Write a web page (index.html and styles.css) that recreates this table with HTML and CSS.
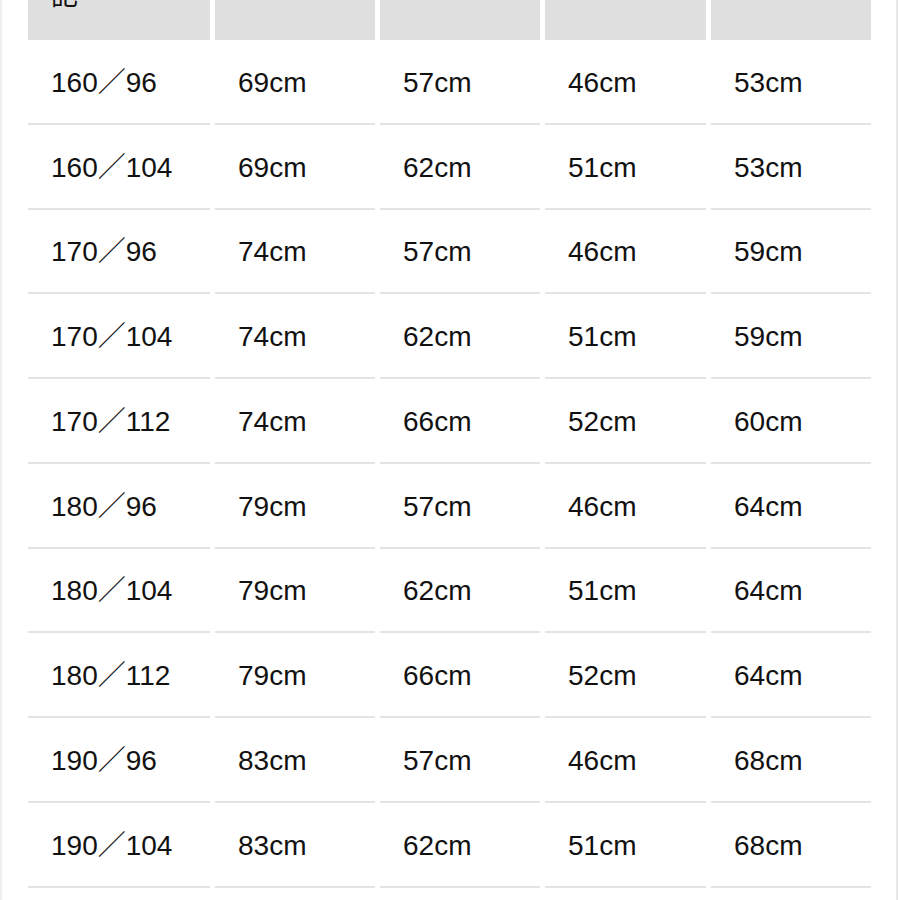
FILE: index.html
```html
<!DOCTYPE html>
<html>
<head>
<meta charset="utf-8">
<link rel="stylesheet" href="styles.css">
</head>
<body>
<div class="frame">
  <div class="table">
    <div class="row head">
      <div class="cell hcell"><span class="htext">記</span></div>
      <div class="cell hcell"></div>
      <div class="cell hcell"></div>
      <div class="cell hcell"></div>
      <div class="cell hcell"></div>
    </div>
    <div class="row"><div class="cell">160／96</div><div class="cell">69cm</div><div class="cell">57cm</div><div class="cell">46cm</div><div class="cell">53cm</div></div>
    <div class="row"><div class="cell">160／104</div><div class="cell">69cm</div><div class="cell">62cm</div><div class="cell">51cm</div><div class="cell">53cm</div></div>
    <div class="row"><div class="cell">170／96</div><div class="cell">74cm</div><div class="cell">57cm</div><div class="cell">46cm</div><div class="cell">59cm</div></div>
    <div class="row"><div class="cell">170／104</div><div class="cell">74cm</div><div class="cell">62cm</div><div class="cell">51cm</div><div class="cell">59cm</div></div>
    <div class="row"><div class="cell">170／112</div><div class="cell">74cm</div><div class="cell">66cm</div><div class="cell">52cm</div><div class="cell">60cm</div></div>
    <div class="row"><div class="cell">180／96</div><div class="cell">79cm</div><div class="cell">57cm</div><div class="cell">46cm</div><div class="cell">64cm</div></div>
    <div class="row"><div class="cell">180／104</div><div class="cell">79cm</div><div class="cell">62cm</div><div class="cell">51cm</div><div class="cell">64cm</div></div>
    <div class="row"><div class="cell">180／112</div><div class="cell">79cm</div><div class="cell">66cm</div><div class="cell">52cm</div><div class="cell">64cm</div></div>
    <div class="row"><div class="cell">190／96</div><div class="cell">83cm</div><div class="cell">57cm</div><div class="cell">46cm</div><div class="cell">68cm</div></div>
    <div class="row"><div class="cell">190／104</div><div class="cell">83cm</div><div class="cell">62cm</div><div class="cell">51cm</div><div class="cell">68cm</div></div>
    <div class="row"><div class="cell"></div><div class="cell"></div><div class="cell"></div><div class="cell"></div><div class="cell"></div></div>
  </div>
</div>
</body>
</html>
```

FILE: styles.css
```css
html, body {
  margin: 0;
  padding: 0;
  background: #ffffff;
  overflow: hidden;
}
.frame {
  box-sizing: border-box;
  width: 898px;
  height: 900px;
  border-left: 2px solid #efefef;
  border-right: 2px solid #e8e8e8;
  overflow: hidden;
}
.table {
  padding-left: 26px;
  font-family: "Liberation Sans", Arial, "Noto Sans CJK SC", sans-serif;
  font-size: 28px;
  color: #111111;
}
.row {
  display: grid;
  grid-template-columns: 182px 160px 160px 161px 160px;
  column-gap: 5px;
  height: 84.75px;
}
.row .cell {
  border-bottom: 2px solid #e4e4e4;
  padding-left: 23px;
  padding-top: 3px;
  display: flex;
  align-items: center;
  box-sizing: border-box;
  line-height: 32px;
  white-space: nowrap;
}
.row.head {
  height: 40px;
}
.hcell {
  background: #dfdfdf;
  border-bottom: none !important;
  align-items: flex-start !important;
  padding-top: 0 !important;
  overflow: hidden;
}
.htext {
  font-family: "Noto Sans CJK TC", "Noto Sans CJK SC", sans-serif;
  font-size: 27px;
  line-height: 30px;
  margin-top: -21px;
  color: #111;
}
```
